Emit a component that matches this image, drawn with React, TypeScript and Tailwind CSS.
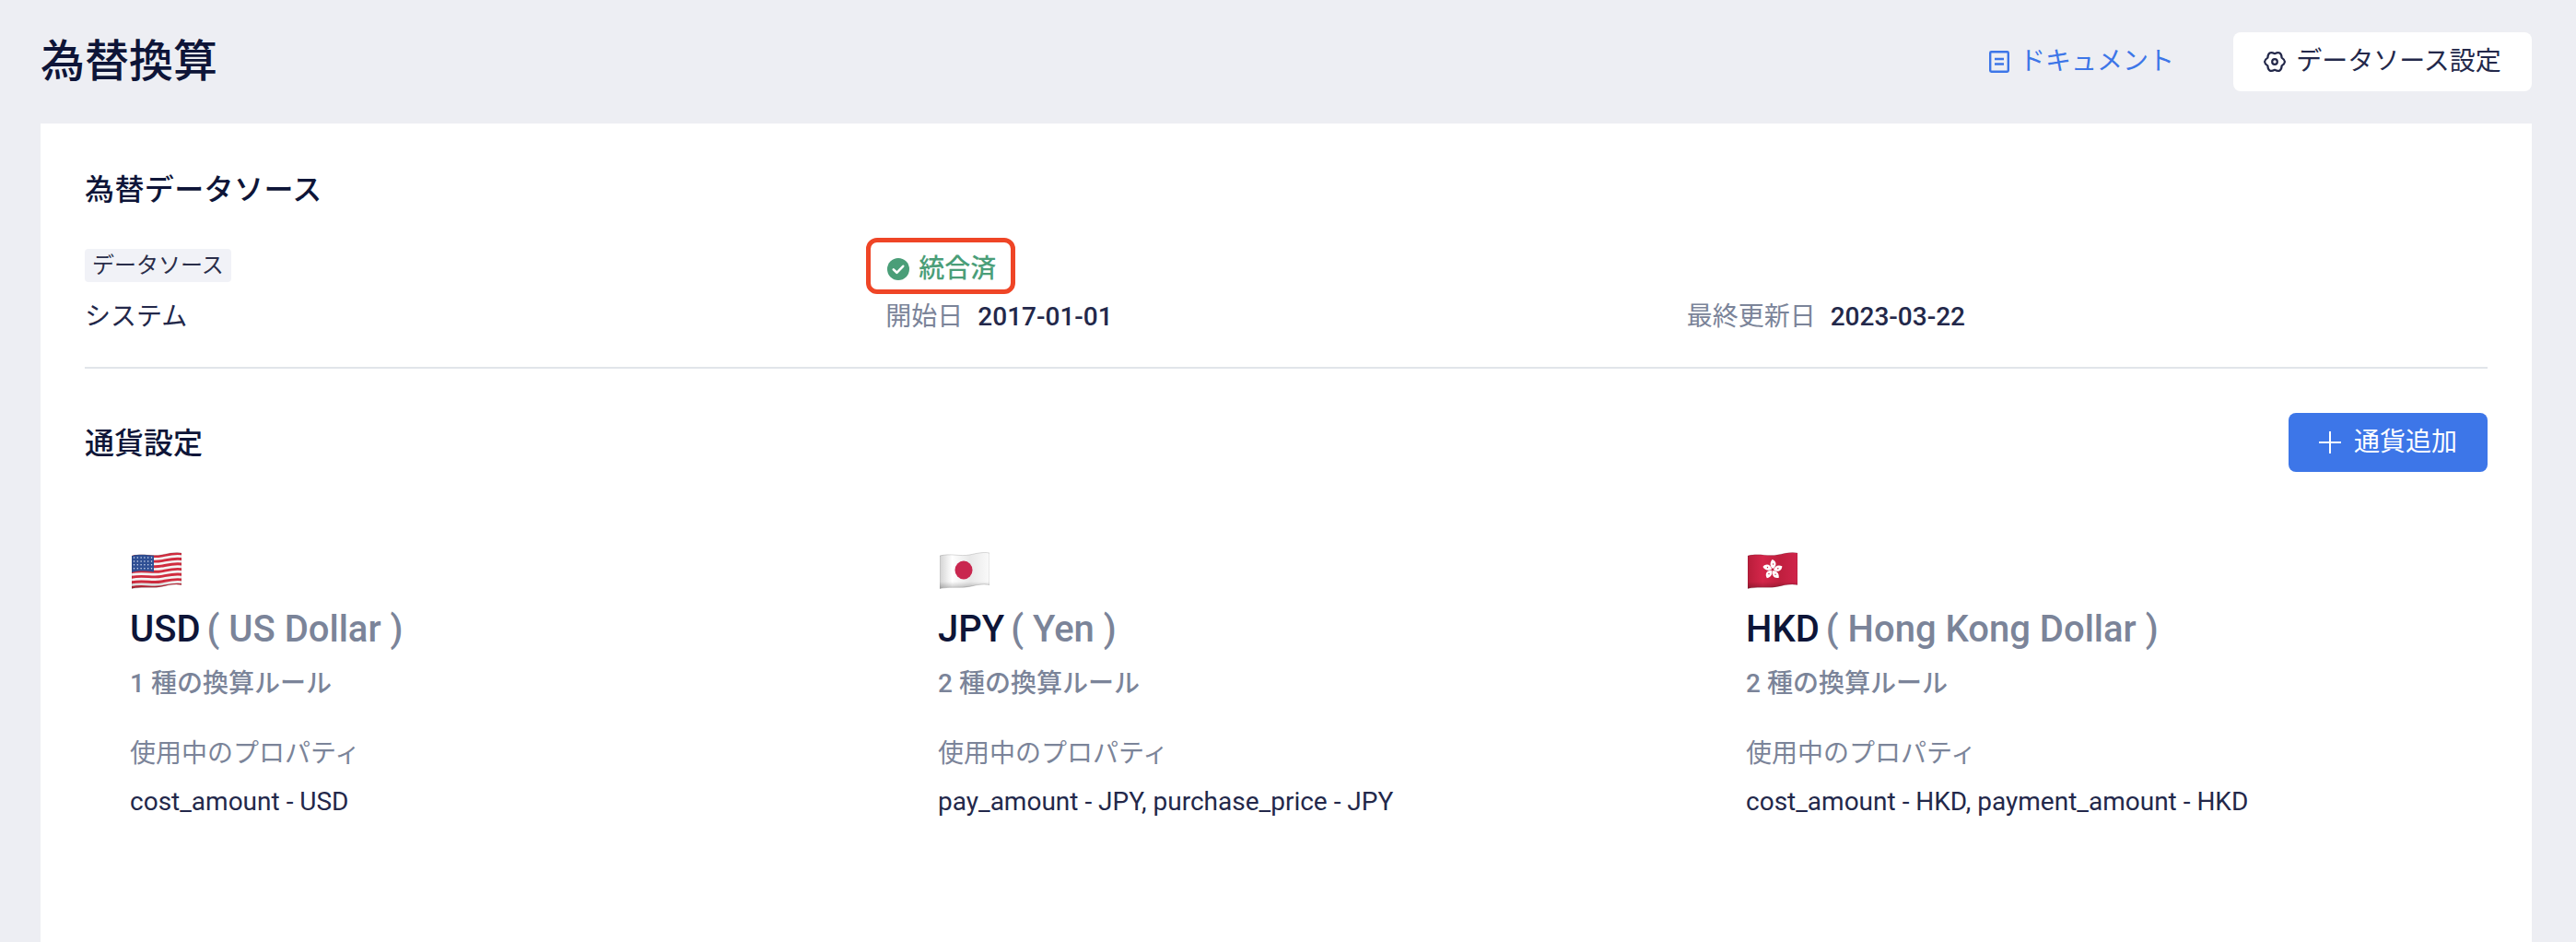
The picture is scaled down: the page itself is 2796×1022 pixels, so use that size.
import { useId } from "react";

const currencies = [
  { code: "USD", name: "US Dollar", rules: 1, props: "cost_amount - USD", flag: "us" },
  { code: "JPY", name: "Yen", rules: 2, props: "pay_amount - JPY, purchase_price - JPY", flag: "jp" },
  { code: "HKD", name: "Hong Kong Dollar", rules: 2, props: "cost_amount - HKD, payment_amount - HKD", flag: "hk" },
];

// waving emoji-style flag outline, shared by the three flags
const FLAG_OUTLINE = "M0 4 C12 1 22 5 32 3 C40 1.5 47 -0.5 54 1 L54 35.5 C46 34 39 36 32 37.5 C22 39.5 12 37 0 39.5 Z";

function stripe(y: number) {
  return `M-1 ${y} C12 ${y - 3} 22 ${y + 1} 32 ${y - 1} C40 ${y - 2.5} 47 ${y - 4.5} 55 ${y - 3}`;
}

function polar(r: number, deg: number) {
  const a = (deg * Math.PI) / 180;
  return `${(12 + r * Math.cos(a)).toFixed(2)} ${(12 + r * Math.sin(a)).toFixed(2)}`;
}

// six rounded lobes, with a notch at the top and bottom centre
const GEAR_PATH =
  `M${polar(8.8, -30)} ` +
  [0, 60, 120, 180, 240, 300].map((deg) => `Q${polar(14.2, deg)} ${polar(8.8, deg + 30)}`).join(" ") +
  " Z";

function Flag({ kind }: { kind: string }) {
  const id = useId();
  return (
    <svg width="54" height="40" viewBox="0 0 54 40" aria-hidden className="ml-[2px] block">
      <defs>
        <clipPath id={`${id}c`}>
          <path d={FLAG_OUTLINE} />
        </clipPath>
        <linearGradient id={`${id}w`} x1="0" y1="0" x2="1" y2="0">
          <stop offset="0" stopColor="#d4d4d4" />
          <stop offset="0.25" stopColor="#ffffff" />
          <stop offset="0.6" stopColor="#e8e8e8" />
          <stop offset="1" stopColor="#fafafa" />
        </linearGradient>
        <linearGradient id={`${id}v`} x1="0" y1="0" x2="0" y2="1">
          <stop offset="0" stopColor="#000000" stopOpacity="0" />
          <stop offset="0.8" stopColor="#000000" stopOpacity="0" />
          <stop offset="1" stopColor="#000000" stopOpacity="0.25" />
        </linearGradient>
        <linearGradient id={`${id}r`} x1="0" y1="0" x2="1" y2="0">
          <stop offset="0" stopColor="#b81d3a" />
          <stop offset="0.3" stopColor="#d4264a" />
          <stop offset="0.65" stopColor="#bf1f3e" />
          <stop offset="1" stopColor="#d0244a" />
        </linearGradient>
      </defs>
      <g clipPath={`url(#${id}c)`}>
        {kind === "us" && (
          <>
            <rect width="54" height="40" fill="#f4f4f4" />
            {[5, 10.6, 16.2, 21.8, 27.4, 33, 38.6].map((y) => (
              <path key={y} d={stripe(y)} fill="none" stroke="#d02c3f" strokeWidth="2.9" />
            ))}
            <path d="M0 4 C8 2 15 2.4 24 3.6 L24 21.6 C15 20.4 8 20 0 22 Z" fill="#2f4f94" />
            {[0, 1, 2, 3].map((r) =>
              [0, 1, 2, 3, 4, 5].map((c) => (
                <circle key={`${r}-${c}`} cx={2.5 + c * 3.8} cy={6 + r * 3.9} r="0.75" fill="#dfe6f5" />
              )),
            )}
          </>
        )}
        {kind === "jp" && (
          <>
            <rect width="54" height="40" fill={`url(#${id}w)`} />
            <ellipse cx="26" cy="19.5" rx="9.5" ry="10" fill="#c9274f" />
          </>
        )}
        {kind === "hk" && (
          <>
            <rect width="54" height="40" fill={`url(#${id}r)`} />
            {[0, 72, 144, 216, 288].map((a) => (
              <g key={a} transform={`rotate(${a} 27 19)`}>
                <path d="M27.2 18 C24 15.5 23.6 11.6 26.6 8 C31.2 9.8 32.2 14.8 27.2 18 Z" fill="#ffffff" />
                <circle cx="27.6" cy="13" r="0.7" fill="#c8203f" />
              </g>
            ))}
          </>
        )}
        <rect width="54" height="40" fill={`url(#${id}v)`} />
      </g>
      <path d={FLAG_OUTLINE} fill="none" stroke="#000000" strokeOpacity="0.18" strokeWidth="0.8" />
    </svg>
  );
}

function DocIcon() {
  return (
    <svg width="22" height="24" viewBox="0 0 22 24" fill="none" stroke="#3d76e8" strokeWidth="2.4" aria-hidden>
      <rect x="1.2" y="1.2" width="19.6" height="21.6" rx="1.2" />
      <path d="M6 9h10M6 14.5h10" />
    </svg>
  );
}

function GearIcon() {
  return (
    <svg width="24" height="24" viewBox="0 0 24 24" fill="none" stroke="#23284a" strokeWidth="2.2" strokeLinejoin="round" aria-hidden>
      <path d={GEAR_PATH} />
      <circle cx="12" cy="12" r="2.8" />
    </svg>
  );
}

function CheckBadge() {
  return (
    <svg width="24" height="24" viewBox="0 0 24 24" aria-hidden>
      <circle cx="12" cy="12" r="12" fill="#4a9e78" />
      <path d="M6.8 12.4l3.6 3.4 6.8-7" fill="none" stroke="#ffffff" strokeWidth="2.6" strokeLinecap="round" strokeLinejoin="round" />
    </svg>
  );
}

function PlusIcon() {
  return (
    <svg width="24" height="24" viewBox="0 0 24 24" stroke="#ffffff" strokeWidth="2" aria-hidden>
      <path d="M0 12h24M12 0v24" />
    </svg>
  );
}

function DateField({ label, value }: { label: string; value: string }) {
  return (
    <div className="flex h-10 items-center gap-4 text-[28px] leading-10">
      <span className="text-[#7b8499]">{label}</span>
      <span className="font-medium text-[#23284a]">{value}</span>
    </div>
  );
}

export default function App() {
  return (
    <div className="flex h-[1022px] flex-col overflow-hidden bg-[#edeef3] font-[Roboto,'Noto_Sans_CJK_JP',sans-serif] text-[#0e1538]">
      <header className="flex h-[134px] shrink-0 items-center justify-between pl-[44px] pr-[48px]">
        <h1 className="text-[48px] font-medium leading-[64px]">為替換算</h1>
        <div className="flex items-center gap-[64px]">
          <a className="flex items-center gap-[11px] text-[28px] text-[#3d76e8]">
            <DocIcon />
            ドキュメント
          </a>
          <button type="button" className="flex h-16 w-[324px] items-center justify-center gap-[11px] rounded-lg bg-white text-[28px] text-[#23284a]">
            <GearIcon />
            データソース設定
          </button>
        </div>
      </header>

      <main className="flex-1 bg-white ml-[44px] mr-[48px] px-12 pt-[52px]">
        <h2 className="text-[32px] font-medium leading-10 tracking-[0.4px]">為替データソース</h2>

        <div className="mt-[44px] grid grid-cols-3">
          <div className="flex flex-col">
            <span className="w-fit rounded bg-[#f1f2f7] px-2 text-[24px] leading-9 text-[#2a2e4a]">データソース</span>
            <span className="mt-[18px] text-[28px] leading-10 text-[#23284a]">システム</span>
          </div>
          <div className="flex flex-col">
            <div className="relative mt-[2px] mb-3 flex h-10 w-fit items-center gap-[10px] pl-[2px] text-[28px] font-medium text-[#4a9e78]">
              <CheckBadge />
              統合済
              <div className="absolute left-[-21px] top-[-14px] h-[61px] w-[162px] rounded-xl border-[5px] border-[#ef4526]" />
            </div>
            <DateField label="開始日" value="2017-01-01" />
          </div>
          <div className="flex flex-col justify-end">
            <DateField label="最終更新日" value="2023-03-22" />
          </div>
        </div>

        <div className="mt-[34px] h-[2px] bg-[#e1e5ea]" />

        <div className="mt-[48px] flex h-16 items-center justify-between">
          <h2 className="mt-[2px] text-[32px] font-medium leading-10">通貨設定</h2>
          <button type="button" className="flex h-16 w-[216px] items-center justify-center gap-[14px] rounded-lg bg-[#3d76e8] text-[28px] text-white">
            <PlusIcon />
            通貨追加
          </button>
        </div>

        <div className="mt-[87px] grid grid-cols-[877px_877px_1fr] pl-[49px]">
          {currencies.map((c) => (
            <div key={c.code} className="flex flex-col">
              <Flag kind={c.flag} />
              <div className="mt-[20px] text-[40px] font-medium leading-[48px]">
                {c.code}
                <span className="ml-[7px] text-[#7b8499]">( {c.name} )</span>
              </div>
              <div className="mt-[15px] text-[28px] font-medium leading-10 text-[#7b8499]">{c.rules} 種の換算ルール</div>
              <div className="mt-[36px] text-[28px] leading-10 text-[#7b8499]">使用中のプロパティ</div>
              <div className="mt-[14px] text-[28px] leading-9 text-[#23284a]">{c.props}</div>
            </div>
          ))}
        </div>
      </main>
    </div>
  );
}
